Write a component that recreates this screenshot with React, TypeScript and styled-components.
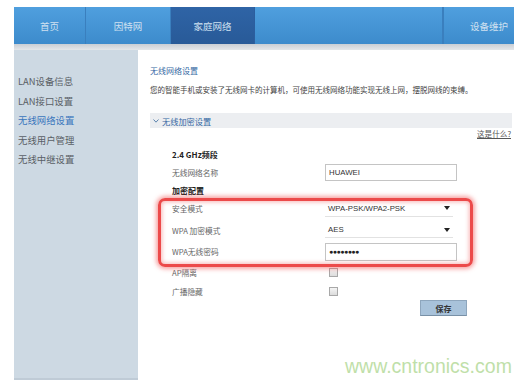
import React from "react";
import styled, { createGlobalStyle } from "styled-components";

const Global = createGlobalStyle`
  html, body { margin: 0; padding: 0; background: #fff; }
  body { font-family: "Liberation Sans", "Noto Sans CJK SC", sans-serif; width: 531px; height: 386px; overflow: hidden; }
`;

const Page = styled.div`
  position: relative;
  padding: 7px 0 0 14px;
  width: 500px;
`;

const Nav = styled.div`
  display: flex;
  height: 37px;
  background: linear-gradient(#4f9fde, #3d8bcc);
`;

const Tab = styled.div<{ $w: number; $active?: boolean; $right?: boolean }>`
  width: ${(p) => p.$w}px;
  flex: ${(p) => (p.$w === 0 ? 1 : "none")};
  display: flex;
  align-items: center;
  justify-content: ${(p) => (p.$right ? "flex-end" : "center")};
  padding-right: ${(p) => (p.$right ? "6px" : "0")};
  box-sizing: border-box;
  border-right: 1px solid ${(p) => (p.$active ? "#2b5e9e" : "#3a7fbe")};
  background: ${(p) => (p.$active ? "linear-gradient(#2f64a6, #285a98)" : "transparent")};
  color: #cfe0f0;
  font-family: "Noto Sans CJK SC", sans-serif;
  font-size: 9.5px;
  &:last-child { border-right: none; border-left: 1px solid #3a7fbe; }
`;

const Band = styled.div`
  height: 6px;
  background: linear-gradient(#c9ced4, #e4e7ea);
`;

const Body = styled.div`
  display: flex;
`;

const Sidebar = styled.div`
  width: 124px;
  height: 330px;
  background: #cdd9e3;
  border-bottom: 2px solid #bfcbd6;
  padding-top: 22px;
  box-sizing: border-box;
  display: flex;
  flex-direction: column;
`;

const SideItem = styled.div<{ $active?: boolean }>`
  height: 19.5px;
  line-height: 19.5px;
  padding-left: 4px;
  font-family: "Noto Sans CJK SC", sans-serif;
  font-size: 9.4px;
  color: ${(p) => (p.$active ? "#3a76bd" : "#5a5f66")};
`;

const Main = styled.div`
  flex: 1;
  padding: 15px 2px 0 12px;
  font-family: "Noto Sans CJK SC", sans-serif;
`;

const Title = styled.div`
  height: 12px;
  line-height: 12px;
  font-size: 8px;
  color: #3568a3;
`;

const Desc = styled.div`
  margin-top: 7px;
  height: 12px;
  line-height: 12px;
  font-size: 7.5px;
  color: #444;
  white-space: nowrap;
`;

const SectionBar = styled.div`
  margin-top: 17px;
  height: 15px;
  background: #eceef1;
  display: flex;
  align-items: center;
  gap: 3px;
  padding-left: 3px;
  font-size: 8.2px;
  color: #3568a3;
`;

const Help = styled.div`
  height: 12px;
  line-height: 12px;
  text-align: right;
  padding-right: 1px;
  font-size: 7.6px;
  color: #555;
  text-decoration: underline;
`;

const Form = styled.div`
  margin-top: 5px;
  padding-left: 22px;
  display: flex;
  flex-direction: column;
`;

const Row = styled.div<{ $h: number }>`
  height: ${(p) => p.$h}px;
  display: flex;
  align-items: center;
`;

const Label = styled.div<{ $bold?: boolean }>`
  width: 153px;
  font-size: ${(p) => (p.$bold ? "8px" : "7.7px")};
  font-weight: ${(p) => (p.$bold ? 700 : 400)};
  color: ${(p) => (p.$bold ? "#222" : "#666")};
  white-space: nowrap;
`;

const TextBox = styled.div<{ $h: number }>`
  width: 132px;
  height: ${(p) => p.$h}px;
  box-sizing: border-box;
  border: 1px solid #c4c4c4;
  background: #fff;
  display: flex;
  align-items: center;
  padding-left: 3px;
  font-family: "Liberation Sans", sans-serif;
  font-size: 7.8px;
  color: #333;
`;

const Dots = styled.span`
  font-size: 7px;
  letter-spacing: -0.5px;
  color: #222;
`;

const SelectBox = styled.div`
  width: 128px;
  height: 16px;
  box-sizing: border-box;
  border-bottom: 1px solid #e2e2e2;
  background: #fff;
  display: flex;
  align-items: center;
  justify-content: space-between;
  padding: 0 3px 0 3px;
  font-family: "Liberation Sans", sans-serif;
  font-size: 7.8px;
  color: #333;
`;

const Check = styled.div`
  margin-left: 4px;
  width: 7px;
  height: 7px;
  border: 1px solid #a8a8a8;
  background: linear-gradient(#f4f4f4, #dcdcdc);
`;

const ButtonRow = styled.div`
  padding-left: 248px;
`;

const SaveButton = styled.div`
  width: 47px;
  height: 16px;
  box-sizing: border-box;
  background: #a8c2da;
  border: 1px solid #8ea6bd;
  border-bottom-color: #7890a6;
  display: flex;
  align-items: center;
  justify-content: center;
  font-size: 8px;
  font-weight: 700;
  color: #333;
`;

const Highlight = styled.div`
  position: absolute;
  left: 158px;
  top: 198px;
  width: 315px;
  height: 69px;
  box-sizing: border-box;
  border: 3px solid #ec4a4a;
  border-radius: 7px;
  box-shadow: 0 0 4px 2px rgba(240, 90, 90, 0.55), inset 0 0 4px 1px rgba(240, 90, 90, 0.45);
  pointer-events: none;
`;

const Watermark = styled.div`
  position: absolute;
  left: 345px;
  top: 355px;
  font-family: "Liberation Sans", sans-serif;
  font-size: 19.5px;
  color: #c0dfa9;
  white-space: nowrap;
`;

const Caret = () => (
  <svg width="6" height="4" viewBox="0 0 6 4">
    <path d="M0 0 L6 0 L3 4 Z" fill="#222" />
  </svg>
);

const Chevron = () => (
  <svg width="6" height="4" viewBox="0 0 6 4">
    <path d="M0.5 0.5 L3 3.2 L5.5 0.5" fill="none" stroke="#5a82ad" strokeWidth="1" />
  </svg>
);

export default function App() {
  return (
    <>
      <Global />
      <Page>
        <Nav>
          <Tab $w={72}>首页</Tab>
          <Tab $w={85}>因特网</Tab>
          <Tab $w={84} $active>家庭网络</Tab>
          <Tab $w={0}></Tab>
          <Tab $w={71} $right>设备维护</Tab>
        </Nav>
        <Band />
        <Body>
          <Sidebar>
            <SideItem>LAN设备信息</SideItem>
            <SideItem>LAN接口设置</SideItem>
            <SideItem $active>无线网络设置</SideItem>
            <SideItem>无线用户管理</SideItem>
            <SideItem>无线中继设置</SideItem>
          </Sidebar>
          <Main>
            <Title>无线网络设置</Title>
            <Desc>您的智能手机或安装了无线网卡的计算机，可使用无线网络功能实现无线上网，摆脱网线的束缚。</Desc>
            <SectionBar>
              <Chevron />
              无线加密设置
            </SectionBar>
            <Help>这是什么?</Help>
            <Form>
              <Row $h={18}>
                <Label $bold>2.4 GHz频段</Label>
              </Row>
              <Row $h={19}>
                <Label>无线网络名称</Label>
                <TextBox $h={17}>HUAWEI</TextBox>
              </Row>
              <Row $h={16}>
                <Label $bold>加密配置</Label>
              </Row>
              <Row $h={21}>
                <Label>安全模式</Label>
                <SelectBox>
                  WPA-PSK/WPA2-PSK
                  <Caret />
                </SelectBox>
              </Row>
              <Row $h={22}>
                <Label>WPA 加密模式</Label>
                <SelectBox>
                  AES
                  <Caret />
                </SelectBox>
              </Row>
              <Row $h={21}>
                <Label>WPA无线密码</Label>
                <TextBox $h={18}>
                  <Dots>●●●●●●●●</Dots>
                </TextBox>
              </Row>
              <Row $h={20}>
                <Label>AP隔离</Label>
                <Check />
              </Row>
              <Row $h={18}>
                <Label>广播隐藏</Label>
                <Check />
              </Row>
              <ButtonRow>
                <SaveButton>保存</SaveButton>
              </ButtonRow>
            </Form>
          </Main>
        </Body>
        <Highlight />
        <Watermark>www.cntronics.com</Watermark>
      </Page>
    </>
  );
}
